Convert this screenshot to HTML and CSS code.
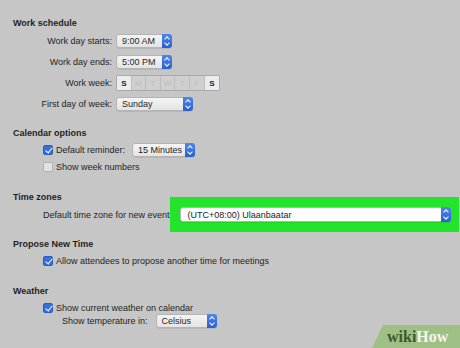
FILE: index.html
```html
<!DOCTYPE html>
<html lang="en">
<head>
    <meta charset="UTF-8">
    <title>Calendar Preferences</title>
    <link rel="stylesheet" href="styles.css">
</head>
<body>
    <div class="prefs">
        <h2 class="heading">Work schedule</h2>
        <div class="schedule">
            <span class="label">Work day starts:</span>
            <div class="select w-time"><span>9:00 AM</span><i class="stepper"></i></div>

            <span class="label">Work day ends:</span>
            <div class="select w-time"><span>5:00 PM</span><i class="stepper"></i></div>

            <span class="label">Work week:</span>
            <div class="week">
                <span class="day on">S</span>
                <span class="day">M</span>
                <span class="day">T</span>
                <span class="day">W</span>
                <span class="day">T</span>
                <span class="day">F</span>
                <span class="day on">S</span>
            </div>

            <span class="label">First day of week:</span>
            <div class="select w-day"><span>Sunday</span><i class="stepper"></i></div>
        </div>

        <h2 class="heading gap-calendar">Calendar options</h2>
        <div class="row indent first">
            <span class="check checked"></span>
            <span>Default reminder:</span>
            <div class="select w-reminder push"><span>15 Minutes</span><i class="stepper"></i></div>
        </div>
        <div class="row indent second">
            <span class="check"></span>
            <span>Show week numbers</span>
        </div>

        <h2 class="heading gap-zones">Time zones</h2>
        <div class="row indent first tz-row">
            <span class="tz-label">Default time zone for new events:</span>
            <div class="highlight">
                <div class="select w-zone"><span>(UTC+08:00) Ulaanbaatar</span><i class="stepper"></i></div>
            </div>
        </div>

        <h2 class="heading gap-propose">Propose New Time</h2>
        <div class="row indent first">
            <span class="check checked"></span>
            <span>Allow attendees to propose another time for meetings</span>
        </div>

        <h2 class="heading gap-weather">Weather</h2>
        <div class="row indent first short">
            <span class="check checked"></span>
            <span>Show current weather on calendar</span>
        </div>
        <div class="row temp-row">
            <span>Show temperature in:</span>
            <div class="select w-temp push-wide"><span>Celsius</span><i class="stepper"></i></div>
        </div>
    </div>

    <div class="watermark"><span class="wiki">wiki</span><span class="how">How</span></div>
</body>
</html>
```

FILE: styles.css
```css
* {
    margin: 0;
    padding: 0;
    box-sizing: border-box;
}

body {
    font-family: "Liberation Sans", Arial, sans-serif;
    font-size: 9px;
    color: #1f1f1f;
    background: #c6c6c6;
    width: 460px;
    height: 348px;
    overflow: hidden;
    position: relative;
}

.prefs {
    padding: 17px 0 0 13px;
}

.heading {
    font-size: 9px;
    font-weight: bold;
    line-height: 12px;
    height: 12px;
}

.gap-calendar { margin-top: 16px; }
.gap-zones { margin-top: 17px; }
.gap-propose { margin-top: 16px; }
.gap-weather { margin-top: 17px; }

/* work schedule grid */
.schedule {
    display: grid;
    grid-template-columns: 99px auto;
    grid-auto-rows: 14px;
    row-gap: 7px;
    column-gap: 4px;
    margin-top: 5px;
    align-items: center;
    justify-items: start;
}

.schedule .label {
    justify-self: end;
}

/* popup buttons */
.select {
    display: flex;
    align-items: center;
    height: 14px;
    background: linear-gradient(#f4f4f4, #e4e4e4);
    border: 1px solid #b4b4b4;
    border-radius: 3px;
    padding-left: 5px;
    box-shadow: 0 1px 0 rgba(0, 0, 0, 0.08);
}

.select span {
    flex: 1;
    white-space: nowrap;
}

.stepper {
    position: relative;
    width: 10px;
    height: 14px;
    margin: -1px -1px -1px 0;
    background: linear-gradient(#4d86ea, #2a5fd0);
    border-radius: 0 3px 3px 0;
}

.stepper::before,
.stepper::after {
    content: "";
    position: absolute;
    left: 3px;
    width: 3px;
    height: 3px;
    border-left: 1px solid #fff;
    border-top: 1px solid #fff;
}

.stepper::before {
    top: 3px;
    transform: rotate(45deg);
}

.stepper::after {
    bottom: 3px;
    transform: rotate(225deg);
}

.w-time { width: 56px; }
.w-day { width: 77px; }
.w-reminder { width: 63px; }
.w-temp { width: 61px; }
.w-zone {
    width: 271px;
    height: 15px;
    background: #fdfdfd;
    padding-left: 7px;
}

.w-zone .stepper {
    height: 15px;
}

/* green box drawn round the time zone popup */
.highlight {
    background: #22e52b;
    padding: 10px 8px 10px 10px;
    margin: -10px -8px -10px -10px;
}

/* work week segmented control */
.week {
    display: flex;
    height: 16px;
    border: 1px solid #a9a9a9;
    border-radius: 2px;
    background: #cfcfcf;
}

.day {
    width: 14.6px;
    display: flex;
    align-items: center;
    justify-content: center;
    font-size: 8px;
    color: #bdbdbd;
    border-right: 1px solid #bcbcbc;
}

.day:last-child {
    border-right: none;
}

.day.on {
    background: #ececec;
    color: #1f1f1f;
    font-weight: bold;
}

/* checkbox rows */
.row {
    display: flex;
    align-items: center;
    height: 14px;
    gap: 3px;
    white-space: nowrap;
}

.indent {
    padding-left: 30px;
}

.row.first { margin-top: 4px; }
.row.second { margin-top: 3px; }
.row.short { height: 13px; }
.tz-row { margin-top: 6px; height: 15px; }

.temp-row {
    padding-left: 49px;
    gap: 0;
}

.check {
    width: 10px;
    height: 10px;
    border: 1px solid #b0b0b0;
    border-radius: 2px;
    background: #e2e2e2;
    position: relative;
    flex: none;
}

.check.checked {
    background: #3370de;
    border-color: #2a5cc2;
}

.check.checked::after {
    content: "";
    position: absolute;
    left: 3px;
    top: 0;
    width: 3px;
    height: 6px;
    border-right: 1.5px solid #fff;
    border-bottom: 1.5px solid #fff;
    transform: rotate(40deg);
}

.push { margin-left: 4px; }
.push-wide { margin-left: 8px; }

.tz-label {
    flex: 0 0 130px;
}

/* watermark in corner */
.watermark {
    position: absolute;
    right: 0;
    bottom: 0;
    width: 88px;
    height: 23px;
    background: rgba(150, 190, 120, 0.85);
    clip-path: polygon(11px 0, 100% 0, 100% 100%, 0 100%);
    font-family: "Liberation Serif", serif;
    font-weight: bold;
    font-size: 16px;
    line-height: 23px;
    padding-left: 15px;
}

.wiki { color: #3c5a2e; }
.how { color: #f2f6ee; }
```
